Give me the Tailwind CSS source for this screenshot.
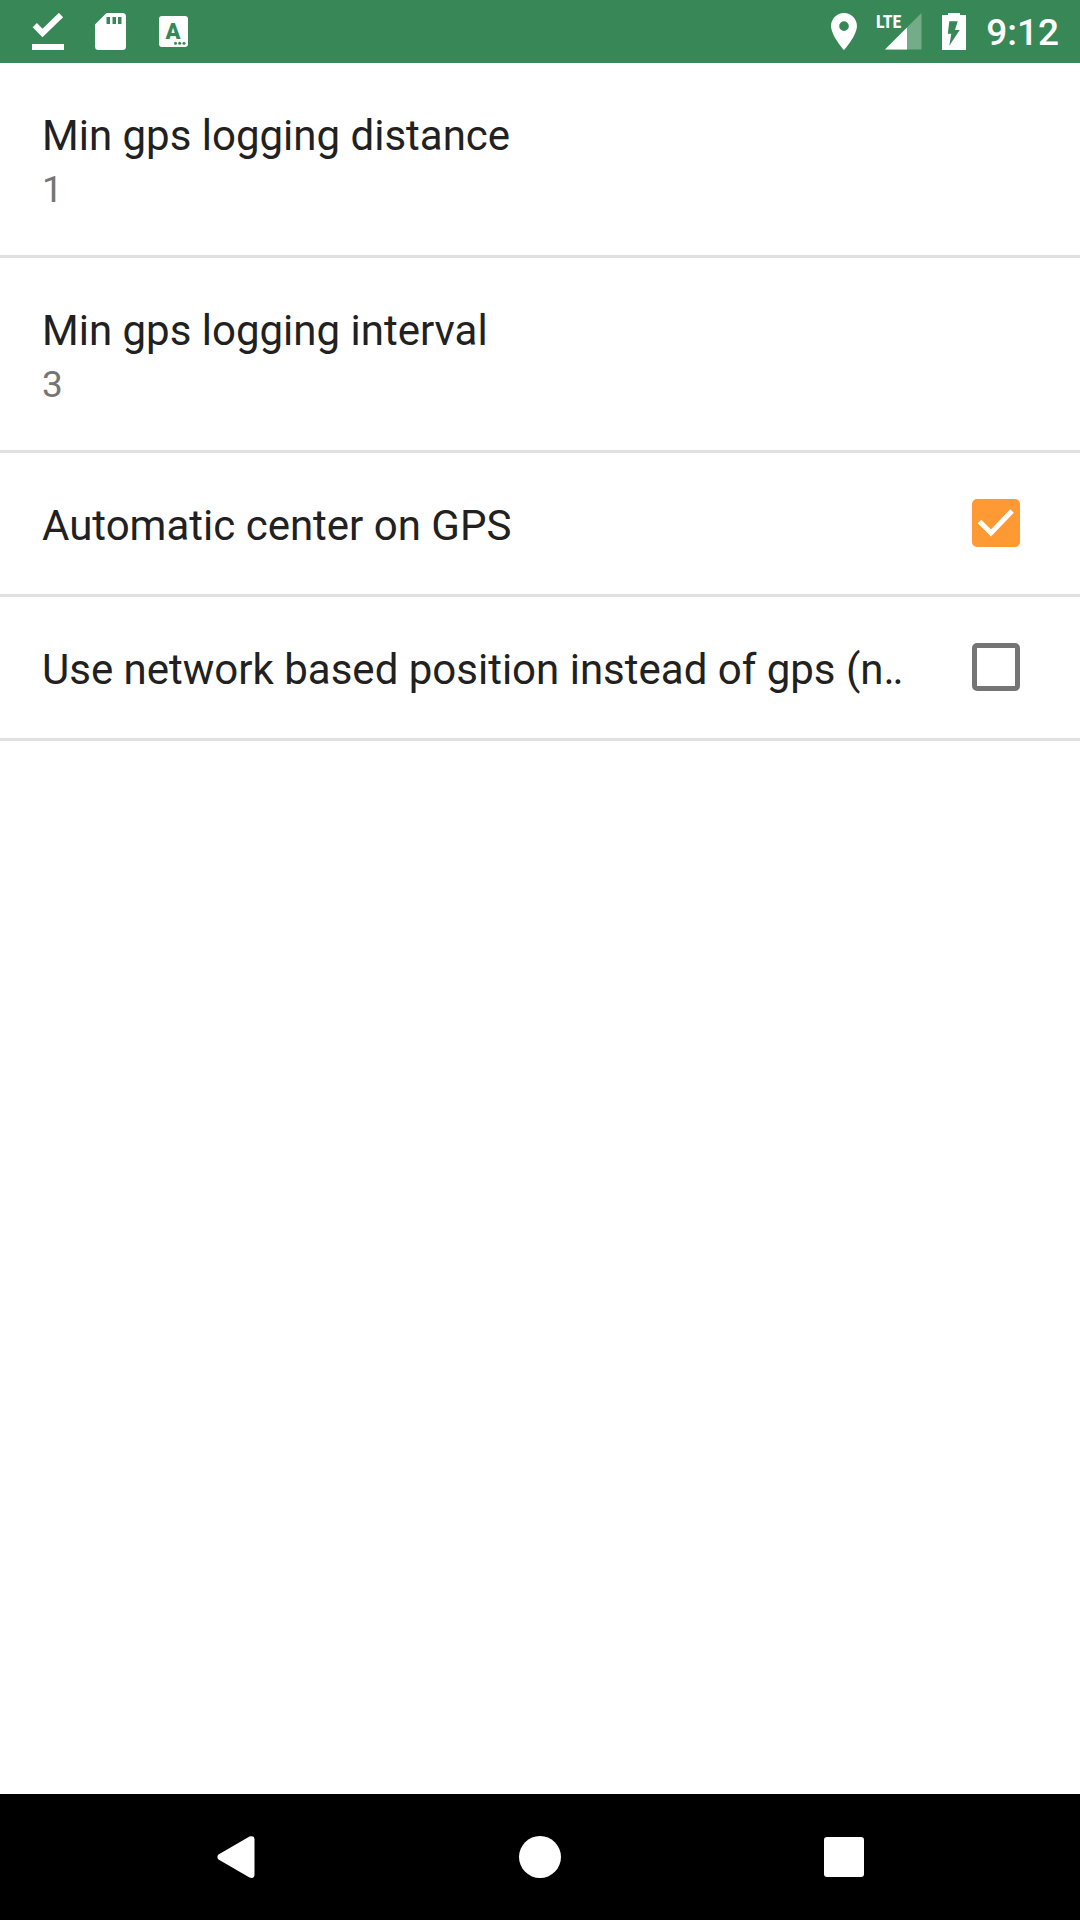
<!DOCTYPE html>
<html lang="en">
<head>
<meta charset="utf-8">
<meta name="viewport" content="width=device-width, initial-scale=1">
<title>GPS settings</title>
<script src="https://cdn.jsdelivr.net/npm/@tailwindcss/browser@4"></script>
</head>
<body class="flex min-h-screen flex-col bg-white font-[Roboto,sans-serif] text-[#212121]">
  <header class="flex h-[63px] items-center justify-between bg-[#388857] pr-[21px] pl-8 text-white">
    <div class="flex items-center gap-[31px]">
      <!-- Download finished -->
      <svg class="h-[37px] w-8" viewBox="0 0 32 37" fill="none" aria-hidden="true">
        <path d="M2.800 12.200L10.500 20L29 2" stroke="currentColor" stroke-width="6"/>
        <path d="M0 31h32v6H0z" fill="currentColor"/>
      </svg>
      <!-- SD card -->
      <svg class="h-[37px] w-[31px]" viewBox="0 0 31 37" fill="currentColor" aria-hidden="true">
        <path fill-rule="evenodd" d="M11.500 0H27.500Q31 0 31 3.500V33.500Q31 37 27.500 37H3.500Q0 37 0 33.500V11.500ZM11.500 4V11H15V4ZM17.500 4V11H21V4ZM23 4V11H26.500V4Z"/>
      </svg>
      <!-- Keyboard language -->
      <svg class="ml-[2px] h-[37px] w-[29px]" viewBox="0 0 29 37" aria-hidden="true">
        <rect y="3" width="29" height="31" rx="3" fill="currentColor"/>
        <text x="14" y="26" text-anchor="middle" class="fill-[#388857] font-[Roboto,sans-serif] text-[22px] font-black">A</text>
        <g fill="#388857"><circle cx="16.500" cy="30.300" r="1.500"/><circle cx="20.700" cy="30.300" r="1.500"/><circle cx="25" cy="30.300" r="1.500"/></g>
      </svg>
    </div>
    <div class="flex items-center gap-5">
      <!-- Location -->
      <svg class="h-[37px] w-[26px]" viewBox="5 2 14 20" fill="currentColor" aria-hidden="true">
        <path d="M12 2C8.130 2 5 5.130 5 9c0 5.250 7 13 7 13s7-7.750 7-13c0-3.870-3.130-7-7-7zm0 9.700a2.600 2.600 0 1 1 0-5.200 2.600 2.600 0 0 1 0 5.200z"/>
      </svg>
      <!-- Mobile signal -->
      <svg class="h-[37px] w-[45px] overflow-visible" viewBox="0 0 45 37" fill="currentColor" aria-label="LTE signal" role="img">
        <path d="M44.500 0V36.500H8Z" fill-opacity=".3"/>
        <path d="M30 14.500V36.500H8Z"/>
        <text x="-1" y="15" class="font-['Roboto_Condensed','Liberation_Sans_Narrow',Roboto,sans-serif] text-[18px] font-bold">LTE</text>
      </svg>
      <!-- Battery charging -->
      <svg class="h-[37px] w-6" viewBox="0 0 24 37" fill="currentColor" aria-hidden="true">
        <path fill-rule="evenodd" d="M6 0H18V2H24V37H0V2H6ZM7.300 8.300L5.800 20.700H9.300L7.300 32.700L17.700 17H13L15.700 8.300Z"/>
      </svg>
      <time class="pt-[2px] text-[37px] leading-[44px] font-medium">9:12</time>
    </div>
  </header>

  <main class="flex-1">
    <button type="button" class="block h-[195px] w-full border-b-3 border-[#e0e0e0] px-[42px] pt-12 text-left align-top">
      <span class="flex h-full flex-col gap-[7px]">
        <span class="text-[42px] leading-[50px]">Min gps logging distance</span>
        <span class="text-[37px] leading-[44px] text-[#757575]">1</span>
      </span>
    </button>
    <button type="button" class="block h-[195px] w-full border-b-3 border-[#e0e0e0] px-[42px] pt-12 text-left align-top">
      <span class="flex h-full flex-col gap-[7px]">
        <span class="text-[42px] leading-[50px]">Min gps logging interval</span>
        <span class="text-[37px] leading-[44px] text-[#757575]">3</span>
      </span>
    </button>
    <label class="flex h-36 items-center justify-between border-b-3 border-[#e0e0e0] pr-[60px] pb-px pl-[42px]">
      <span class="pt-[5px] text-[42px] leading-[50px] whitespace-nowrap">Automatic center on GPS</span>
      <span class="grid size-12 shrink-0">
        <input type="checkbox" checked class="peer col-start-1 row-start-1 size-12 appearance-none rounded-[5px] border-[5px] border-[#757575] checked:border-[#ff9933] checked:bg-[#ff9933]">
        <svg class="pointer-events-none invisible col-start-1 row-start-1 size-12 peer-checked:visible" viewBox="0 0 48 48" fill="none" aria-hidden="true"><path d="M7.500 22.500L19 34L40 12" stroke="#fff" stroke-width="5"/></svg>
      </span>
    </label>
    <label class="flex h-36 items-center justify-between border-b-3 border-[#e0e0e0] pr-[60px] pb-px pl-[42px]">
      <span class="pt-[5px] text-[42px] leading-[50px] whitespace-nowrap">Use network based position instead of gps (n‥</span>
      <span class="grid size-12 shrink-0">
        <input type="checkbox" class="peer col-start-1 row-start-1 size-12 appearance-none rounded-[5px] border-[5px] border-[#757575] checked:border-[#ff9933] checked:bg-[#ff9933]">
        <svg class="pointer-events-none invisible col-start-1 row-start-1 size-12 peer-checked:visible" viewBox="0 0 48 48" fill="none" aria-hidden="true"><path d="M7.500 22.500L19 34L40 12" stroke="#fff" stroke-width="5"/></svg>
      </span>
    </label>
  </main>

  <nav class="flex h-[126px] items-center justify-center bg-black text-white">
    <button type="button" aria-label="Back" class="flex h-full w-[304px] items-center justify-center">
      <svg class="h-[42px] w-[38px]" viewBox="0 0 38 42" fill="currentColor" aria-hidden="true"><path d="M1.500 18.500L32.500 .5Q37.500 -1 37.500 3.500V38.500Q37.500 43 32.500 41.500L1.500 23.500Q-.8 21 1.500 18.500Z"/></svg>
    </button>
    <button type="button" aria-label="Home" class="flex h-full w-[304px] items-center justify-center">
      <span class="size-[42px] rounded-full bg-white"></span>
    </button>
    <button type="button" aria-label="Recent apps" class="flex h-full w-[304px] items-center justify-center">
      <span class="size-10 rounded-[3px] bg-white"></span>
    </button>
  </nav>
</body>
</html>
